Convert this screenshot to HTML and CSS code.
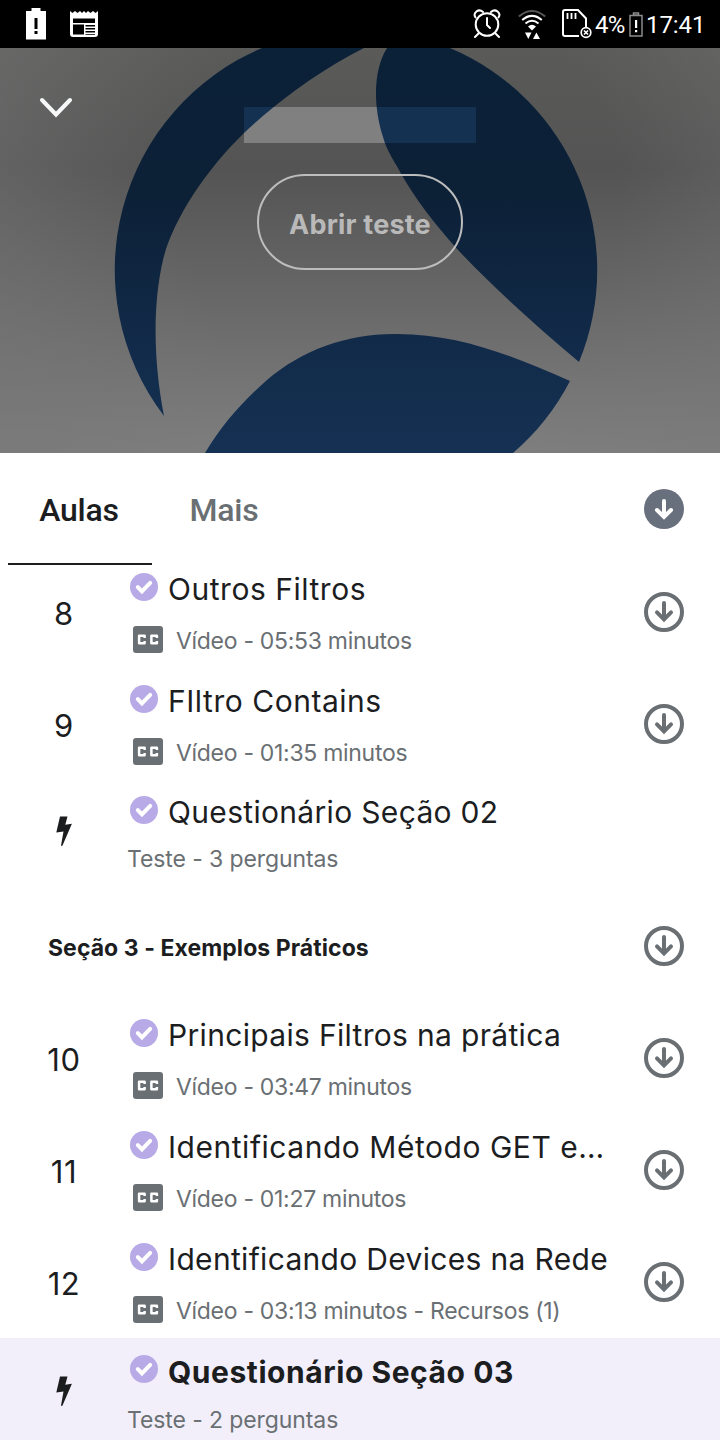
FILE: index.html
```html
<!DOCTYPE html>
<html lang="pt-BR">
<head>
<meta charset="utf-8">
<title>Aulas</title>
<link rel="stylesheet" href="styles.css">
</head>
<body>
<svg class="defs" width="0" height="0" aria-hidden="true">
  <symbol id="check" viewBox="0 0 28 28"><circle cx="14" cy="14" r="14" fill="#b8aae6"/><path d="M7.800 14.200l4.100 4.100 8.300-8.400" fill="none" stroke="#fff" stroke-width="4" stroke-linecap="round"/></symbol>
  <symbol id="cc" viewBox="0 0 30 27"><rect width="30" height="27" rx="3" fill="#6a6f73"/><path d="M11.600 12V9.700H6.100v7.600h5.500V15M23.900 12V9.700h-5.500v7.600h5.500V15" fill="none" stroke="#fff" stroke-width="2.500" stroke-linejoin="round"/></symbol>
  <symbol id="down" viewBox="0 0 40 40"><circle cx="20" cy="20" r="18" fill="none" stroke="#6a6f73" stroke-width="4"/><path d="M20 11v16M13 20.300l7 7 7-7" fill="none" stroke="#6a6f73" stroke-width="4" stroke-linecap="round"/></symbol>
  <symbol id="down-solid" viewBox="0 0 40 40"><circle cx="20" cy="20" r="20" fill="#686f7d"/><path d="M20 12v15M13 21l7 7 7-7" fill="none" stroke="#fff" stroke-width="4" stroke-linecap="round"/></symbol>
  <symbol id="bolt" viewBox="0 0 16 31"><path d="M4 .5h7.500L9.300 8.700l6.600-.9L6.500 29.500q-1.400 1.300-1.400-.6L7.500 15.600.3 16.600z" fill="#1c1d1f"/></symbol>
</svg>

<header class="status">
  <svg class="st-batt" width="20" height="32" viewBox="0 0 20 32"><path d="M0 3h5.500V0h9v3H20v28.500H0z" fill="#fff"/><path d="M8.500 10h3v11h-3zM8.500 23h3v3h-3z" fill="#000"/></svg>
  <svg class="st-news" width="28" height="26" viewBox="0 0 28 26"><path d="M0 0l2.500 2L5 0l2.500 2L10 0l2 2 2-2 2 2 2-2 2.500 2L23 0l2.500 2L28 0v23q0 3-3 3H3q-3 0-3-3z" fill="#fff"/><path d="M3 7.500h22v4.500H3zM3 13.500h11v10H3zM15.500 14H25v1.500h-9.500zM15.500 17H25v1.500h-9.500zM15.500 20H25v1.500h-9.500zM15.500 23H25v.8h-9.500z" fill="#000"/></svg>
  <svg class="st-alarm" width="28" height="30" viewBox="0 0 28 30" fill="none" stroke="#fff" stroke-width="2" stroke-linecap="round"><circle cx="14" cy="15.500" r="11.300"/><path d="M14 9v7l3 3M5.500 24.500L2 28M22.500 24.500L26 28M2.500 8.500C-.5 4 5.500-1 10 3M25.500 8.500C28.500 4 22.500-1 18 3"/></svg>
  <svg class="st-wifi" width="28" height="30" viewBox="0 0 28 30"><g fill="none" stroke="#fff" stroke-width="2"><path d="M.8 6.500Q14-4.500 27.200 6.500" stroke="#555"/><path d="M4.200 10Q14 1.800 23.800 10M7.500 13.500Q14 8 20.500 13.500"/></g><path d="M10 16.500q4-3.500 8 0l-4 4zM7 22.500h6.500l-3.200 6.500zM15 29l3.400-6.500L22 29z" fill="#fff"/></svg>
  <svg class="st-sim" width="30" height="30" viewBox="0 0 30 30"><path d="M17 27H3q-2 0-2-2V3q0-2 2-2h13l8 8.500V18" fill="none" stroke="#fff" stroke-width="2"/><path d="M5.500 4v6M9.500 4v6M13.500 4v6" stroke="#fff" stroke-width="1.800"/><circle cx="24" cy="23.500" r="4.800" fill="#000" stroke="#fff" stroke-width="1.700"/><path d="M22 21.500l4 4m0-4l-4 4" stroke="#fff" stroke-width="1.700"/></svg>
  <span class="st-pct">4%</span>
  <svg class="st-low" width="14" height="25" viewBox="0 0 14 25"><path d="M4.500 1h5v2h-5zM1 3.500h12v20.500H1z" fill="none" stroke="#8a8a8a" stroke-width="1.500"/><path d="M6 8h2.200v8H6zM6 18h2.200v2.200H6z" fill="#fff"/></svg>
  <span class="st-time">17:41</span>
</header>

<section class="hero">
  <svg class="hero-art" width="720" height="405" viewBox="0 48 720 405">
    <defs>
      <linearGradient id="gray" x1="0" y1="48" x2="0" y2="453" gradientUnits="userSpaceOnUse"><stop offset="0" stop-color="#5a5a59"/><stop offset=".3" stop-color="#545454"/><stop offset="1" stop-color="#7f7f7f"/></linearGradient>
      <radialGradient id="side" cx="400" cy="200" r="440" gradientUnits="userSpaceOnUse"><stop offset=".5" stop-color="#777" stop-opacity="0"/><stop offset="1" stop-color="#777" stop-opacity=".5"/></radialGradient>
      <linearGradient id="navy" x1="0" y1="48" x2="0" y2="453" gradientUnits="userSpaceOnUse"><stop offset="0" stop-color="#0b2138"/><stop offset=".35" stop-color="#0c2036"/><stop offset=".75" stop-color="#122b4a"/><stop offset="1" stop-color="#153153"/></linearGradient>
      <clipPath id="bar"><rect x="244" y="107" width="232" height="36"/></clipPath>
      <g id="petals">
        <path d="M262 48A241 241 0 0 0 164 416C154 365 152 307 163 260C172 222 204 172 244 133C280 99 324 68 364 48z"/>
        <path d="M387 48H450A241 241 0 0 1 579 362C536 326 496 290 458 250C433 222 415 198 403 177C392 157 387 151 383 137C374 110 372 72 387 48z"/>
        <path d="M205 453C221 426 242 402 267 380C302 350 347 334 393 334C459 333 515 357 570 381A241 241 0 0 1 513 453z"/>
      </g>
    </defs>
    <rect y="48" width="720" height="405" fill="url(#gray)"/>
    <rect y="48" width="720" height="405" fill="url(#side)"/>
    <use href="#petals" fill="url(#navy)"/>
    <g clip-path="url(#bar)"><rect x="244" y="107" width="232" height="36" fill="#808080"/><use href="#petals" fill="#153152"/></g>
    <path d="M42 100l14 14.500L70 100" fill="none" stroke="#f7f8fa" stroke-width="4" stroke-linecap="round"/>
  </svg>
  <button class="open-test">Abrir teste</button>
</section>

<nav class="tabs">
  <a class="tab tab-active">Aulas</a>
  <a class="tab">Mais</a>
  <svg class="tabs-down" width="40" height="40"><use href="#down-solid"/></svg>
</nav>

<main class="list">
  <article class="row">
    <span class="num">8</span>
    <div class="info"><h3 class="title wide"><svg class="check" width="28" height="28"><use href="#check"/></svg>Outros Filtros</h3>
      <p class="sub"><svg class="cc" width="30" height="27"><use href="#cc"/></svg>Vídeo - 05:53 minutos</p></div>
    <svg class="dl" width="40" height="40"><use href="#down"/></svg>
  </article>
  <article class="row">
    <span class="num">9</span>
    <div class="info"><h3 class="title wide"><svg class="check" width="28" height="28"><use href="#check"/></svg>FIltro Contains</h3>
      <p class="sub"><svg class="cc" width="30" height="27"><use href="#cc"/></svg>Vídeo - 01:35 minutos</p></div>
    <svg class="dl" width="40" height="40"><use href="#down"/></svg>
  </article>
  <article class="row quiz">
    <svg class="bolt" width="16" height="31"><use href="#bolt"/></svg>
    <div class="info"><h3 class="title"><svg class="check" width="28" height="28"><use href="#check"/></svg>Questionário Seção 02</h3>
      <p class="sub">Teste - 3 perguntas</p></div>
  </article>
  <div class="row section">
    <h2 class="section-title">Seção 3 - Exemplos Práticos</h2>
    <svg class="dl" width="40" height="40"><use href="#down"/></svg>
  </div>
  <article class="row">
    <span class="num">10</span>
    <div class="info"><h3 class="title"><svg class="check" width="28" height="28"><use href="#check"/></svg>Principais Filtros na prática</h3>
      <p class="sub"><svg class="cc" width="30" height="27"><use href="#cc"/></svg>Vídeo - 03:47 minutos</p></div>
    <svg class="dl" width="40" height="40"><use href="#down"/></svg>
  </article>
  <article class="row">
    <span class="num">11</span>
    <div class="info"><h3 class="title wide"><svg class="check" width="28" height="28"><use href="#check"/></svg>Identificando Método GET e…</h3>
      <p class="sub"><svg class="cc" width="30" height="27"><use href="#cc"/></svg>Vídeo - 01:27 minutos</p></div>
    <svg class="dl" width="40" height="40"><use href="#down"/></svg>
  </article>
  <article class="row last">
    <span class="num">12</span>
    <div class="info"><h3 class="title"><svg class="check" width="28" height="28"><use href="#check"/></svg>Identificando Devices na Rede</h3>
      <p class="sub"><svg class="cc" width="30" height="27"><use href="#cc"/></svg>Vídeo - 03:13 minutos - Recursos (1)</p></div>
    <svg class="dl" width="40" height="40"><use href="#down"/></svg>
  </article>
  <article class="row quiz current">
    <svg class="bolt" width="16" height="31"><use href="#bolt"/></svg>
    <div class="info"><h3 class="title"><svg class="check" width="28" height="28"><use href="#check"/></svg>Questionário Seção 03</h3>
      <p class="sub">Teste - 2 perguntas</p></div>
  </article>
</main>
</body>
</html>
```
FILE: styles.css
```css
* { box-sizing: border-box; margin: 0; }
html, body { height: 1440px; overflow: hidden; }
body {
  width: 720px;
  display: flex;
  flex-direction: column;
  background: #fff;
  color: #1c1d1f;
  font-family: Inter, "Liberation Sans", sans-serif;
}
svg { display: block; flex: none; }
.defs { display: none; }

.status {
  height: 48px;
  flex: none;
  display: flex;
  align-items: flex-start;
  padding-left: 26px;
  background: #000;
  color: #fff;
  font: 24px/28px Roboto, sans-serif;
}
.st-batt { margin-top: 8px; }
.st-news { margin: 11px 0 0 24px; }
.st-alarm { margin: 9px 0 0 375px; }
.st-wifi { margin: 10px 0 0 17px; }
.st-sim { margin: 9px 0 0 16px; }
.st-pct { width: 37px; margin: 11px 0 0 3px; letter-spacing: -.8px; white-space: nowrap; }
.st-low { margin: 12px 0 0 -3px; }
.st-time { margin: 11px 0 0 3px; letter-spacing: -.1px; }

.hero { height: 405px; flex: none; display: grid; justify-items: center; }
.hero-art { grid-area: 1 / 1; }
.open-test {
  grid-area: 1 / 1;
  z-index: 1;
  width: 206px;
  height: 96px;
  margin-top: 126px;
  padding: 6px 0 0;
  border: 2px solid #bdbdbd;
  border-radius: 48px;
  background: none;
  color: #b9b9b9;
  font: 700 27px/32px Inter, sans-serif;
  letter-spacing: .2px;
}

.tabs {
  height: 113px;
  flex: none;
  display: flex;
  padding: 0 36px 0 8px;
  background: #fff;
  z-index: 1;
}
.tab {
  width: 144px;
  height: 112px;
  color: #6a6f73;
  font: 500 32px/114px Roboto, sans-serif;
  letter-spacing: -.2px;
  text-align: center;
}
.tab-active { padding-right: 2px; color: #1c1d1f; border-bottom: 2px solid #1c1d1f; }
.tabs-down { margin: 36px 0 0 auto; }

.list { flex: none; margin-top: -12px; }
.row { height: 112px; display: flex; padding-right: 36px; }
.num { width: 128px; padding-top: 40px; font-size: 31px; line-height: 39px; letter-spacing: .6px; text-align: center; }
.info { flex: 1; padding-top: 15px; white-space: nowrap; }
.title {
  height: 40px;
  display: flex;
  gap: 10px;
  padding-left: 2px;
  font-size: 30px;
  font-weight: 400;
  line-height: 40px;
  letter-spacing: .32px;
}
.wide { letter-spacing: .53px; }
.check { margin-top: 4px; }
.sub {
  display: flex;
  gap: 13px;
  margin-top: 16px;
  padding-left: 5px;
  color: #6a6f73;
  font-size: 23px;
  line-height: 32px;
  letter-spacing: -.3px;
}
.cc { margin-top: 1px; }
.dl { margin-top: 38px; }
.quiz .info { padding-top: 14px; }
.quiz .sub { margin-top: 11px; margin-left: -1px; padding-left: 0; letter-spacing: -.1px; }
.bolt { margin: 38px 56px 0; }
.section { height: 110px; padding-left: 48px; justify-content: space-between; }
.section-title { font-size: 23px; line-height: 117px; letter-spacing: .06px; }
.section .dl { margin-top: 36px; }
.last { height: 114px; }
.current { height: 114px; background: #f2effa; }
.current .check { margin-top: 3px; }
.current .title { font-weight: 700; letter-spacing: .55px; }
.current .sub { margin-top: 12px; }
```
